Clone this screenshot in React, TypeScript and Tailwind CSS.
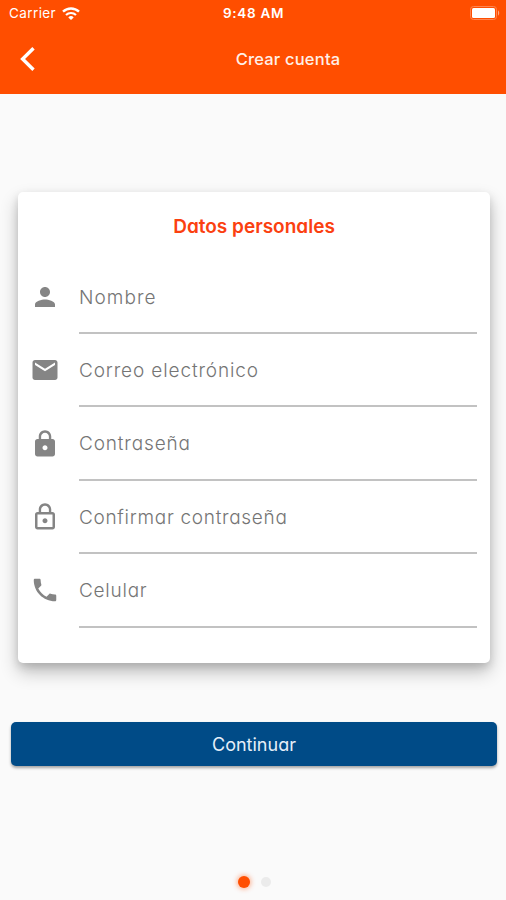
import { useState } from "react";
import type { IconType } from "react-icons";
import { MdLock, MdLockOutline, MdMail, MdPerson, MdPhone } from "react-icons/md";

type Field = {
  label: string;
  type: string;
  icon: IconType;
  tracking: string;
};

const fields: Field[] = [
  { label: "Nombre", type: "text", icon: MdPerson, tracking: "tracking-[1.05px]" },
  { label: "Correo electrónico", type: "email", icon: MdMail, tracking: "tracking-[0.87px]" },
  { label: "Contraseña", type: "password", icon: MdLock, tracking: "tracking-[0.85px]" },
  { label: "Confirmar contraseña", type: "password", icon: MdLockOutline, tracking: "tracking-[0.7px]" },
  { label: "Celular", type: "tel", icon: MdPhone, tracking: "tracking-[0.75px]" },
];

function StatusBar() {
  return (
    <div className="grid h-[26px] grid-cols-3 items-center pl-[9px] pr-[6px] text-[13px]">
      <div className="flex items-center gap-[6px] pt-px">
        <span className="text-[13.5px] tracking-[0.4px]">Carrier</span>
        <svg viewBox="0 0 18 14" className="h-[14px] w-[18px]" fill="none" stroke="currentColor">
          <path d="M1 4.7a11.5 11.5 0 0 1 16 0" strokeWidth="2.4" />
          <path d="M4 8a7.2 7.2 0 0 1 10 0" strokeWidth="2.2" />
          <path d="M9 13.1 6.3 10.4a3.9 3.9 0 0 1 5.4 0z" fill="currentColor" stroke="none" />
        </svg>
      </div>
      <span className="whitespace-nowrap pr-[2px] pt-px text-center text-[13.5px] font-semibold tracking-[0.7px]">
        9:48 AM
      </span>
      <svg viewBox="0 0 30 14" className="h-[14px] w-[30px] justify-self-end" fill="none">
        <rect x="0.5" y="0.5" width="26" height="13" rx="3" stroke="#ff8450" />
        <rect x="2" y="2" width="23" height="10" rx="1.5" fill="white" />
        <path d="M28 4.5c1.6.6 1.6 4.4 0 5z" fill="#ffa884" />
      </svg>
    </div>
  );
}

function Header() {
  return (
    <header className="h-[93.5px] bg-[#ff4e00] text-white">
      <StatusBar />
      <div className="flex h-[66px] items-center">
        <button aria-label="Volver" className="w-[70px] pl-[20px]">
          <svg viewBox="0 0 15 24" className="h-6 w-[15px]" fill="none" stroke="currentColor" strokeWidth="3.4">
            <path d="M13.5 1.2 2.6 12l10.9 10.8" />
          </svg>
        </button>
        <h1 className="flex-1 text-center text-[16.5px] font-medium tracking-[0.2px] text-[#fff0e8]">
          Crear cuenta
        </h1>
      </div>
    </header>
  );
}

function FieldRow({ field }: { field: Field }) {
  const Icon = field.icon;

  return (
    <label className="flex h-[73.4px] items-center pl-[11.5px] pr-[13px]">
      <Icon className="mb-px mr-[19.5px] size-[30px] shrink-0 text-[#858585]" />
      <span className="flex h-full flex-1 items-center border-b-2 border-[#c2c2c2] pt-[3px]">
        <input
          type={field.type}
          placeholder={field.label}
          className={`w-full text-[19px] font-light outline-none placeholder:text-[#757575] placeholder:opacity-100 ${field.tracking}`}
        />
      </span>
    </label>
  );
}

export default function App() {
  const [page] = useState(0);

  return (
    <div className="flex h-[900px] w-[506px] flex-col overflow-hidden bg-[#fafafa] font-['Inter','Roboto',sans-serif]">
      <Header />

      <main className="flex flex-1 flex-col [font-feature-settings:'cv11']">
        {/* Personal data card */}
        <section className="ml-[18px] mr-4 mt-[98.5px] h-[471px] rounded-[5px] bg-white shadow-[0_9px_18px_rgba(0,0,0,0.24),0_4px_8px_rgba(0,0,0,0.13)]">
          <h2 className="flex h-[68.6px] items-center justify-center pt-[2px] text-[19px] font-semibold text-[#fb4010]">
            Datos personales
          </h2>
          {fields.map((field) => (
            <FieldRow key={field.label} field={field} />
          ))}
        </section>

        <button className="ml-[11px] mr-[9px] mt-[59px] h-11 rounded-[5px] bg-[#004b87] text-[18px] text-[#e6eff8] shadow-[0_2px_3px_rgba(0,0,0,0.35)]">
          Continuar
        </button>

        {/* Page indicator */}
        <div className="mt-auto flex items-center justify-center gap-[11px] pb-3 pl-[3px]">
          {[0, 1].map((i) => (
            <span
              key={i}
              className={
                i === page
                  ? "size-3 rounded-full bg-[#ff4e00] shadow-[0_0_5px_1px_rgba(255,78,0,0.45)]"
                  : "size-2.5 rounded-full bg-[#ebebeb]"
              }
            />
          ))}
        </div>
      </main>
    </div>
  );
}
